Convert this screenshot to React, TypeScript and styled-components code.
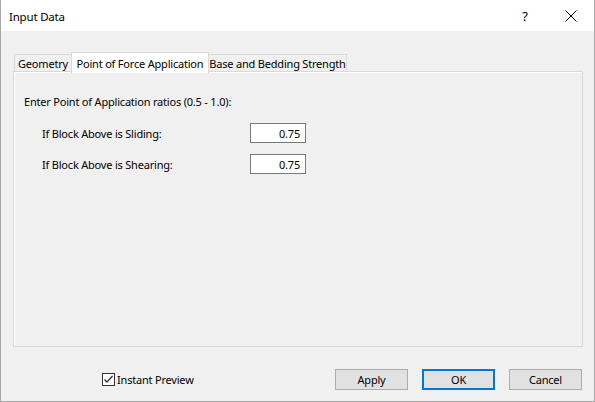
import React, { useState } from "react";
import styled, { createGlobalStyle } from "styled-components";

const GlobalStyle = createGlobalStyle`
  html, body {
    margin: 0;
    padding: 0;
    background: #f0f0f0;
  }
  * {
    box-sizing: border-box;
  }
`;

const Window = styled.div`
  width: 595px;
  height: 402px;
  display: flex;
  flex-direction: column;
  background: #f0f0f0;
  border: 1px solid #a8a8a8;
  border-top: none;
  font-family: "Noto Sans", "Open Sans", sans-serif;
  font-size: 11px;
  letter-spacing: -0.2px;
  color: #000;
`;

const TitleBar = styled.div`
  height: 31px;
  flex: none;
  display: flex;
  align-items: center;
  background: #fff;
  padding-left: 8px;
`;

const Title = styled.div`
  flex: 1;
  font-size: 11.5px;
  padding-top: 1px;
`;

const TitleButton = styled.div`
  width: 46px;
  height: 31px;
  display: flex;
  align-items: center;
  justify-content: center;
  font-size: 13px;
`;

const Body = styled.div`
  flex: 1;
  display: flex;
  flex-direction: column;
  padding: 20px 12px 0 12px;
`;

const TabRow = styled.div`
  display: flex;
  align-items: flex-end;
  height: 21px;
  padding-left: 1px;
  position: relative;
  z-index: 1;
`;

const Tab = styled.div<{ $active?: boolean; $w: number }>`
  height: ${p => (p.$active ? 21 : 18)}px;
  width: ${p => p.$w}px;
  display: flex;
  align-items: center;
  justify-content: center;
  border: 1px solid #d9d9d9;
  border-bottom: ${p => (p.$active ? "none" : "1px solid #d9d9d9")};
  background: ${p => (p.$active ? "#fff" : "#f0f0f0")};
  margin-left: ${p => (p.$active ? -1 : 0)}px;
  margin-right: ${p => (p.$active ? -1 : 0)}px;
  position: relative;
  z-index: ${p => (p.$active ? 2 : 1)};
  margin-bottom: ${p => (p.$active ? -1 : 0)}px;
  white-space: nowrap;
`;

const Panel = styled.div`
  width: 570px;
  height: 276px;
  margin-top: -1px;
  border: 1px solid #d9d9d9;
  box-shadow: inset 1px 1px 0 #fff;
  padding: 19px 0 0 10px;
  display: flex;
  flex-direction: column;
`;

const Prompt = styled.div`
  height: 20px;
  display: flex;
  align-items: center;
  margin-bottom: 12px;
`;

const FieldRow = styled.div`
  display: flex;
  align-items: center;
  padding-left: 18px;
  margin-bottom: 11px;
`;

const FieldLabel = styled.div`
  width: 208px;
`;

const ValueBox = styled.input`
  width: 56px;
  height: 20px;
  border: 1px solid #7a7a7a;
  background: #fff;
  text-align: right;
  padding: 0 5px 0 0;
  font: inherit;
  letter-spacing: inherit;
  color: #000;
  outline: none;
`;

const Footer = styled.div`
  display: flex;
  align-items: center;
  margin-top: 22px;
  height: 21px;
`;

const CheckGroup = styled.label`
  display: flex;
  align-items: center;
  margin-left: 89px;
  gap: 2px;
  flex: 1;
`;

const CheckBox = styled.span`
  width: 13px;
  height: 13px;
  border: 1px solid #333;
  background: #fff;
  display: flex;
  align-items: center;
  justify-content: center;
`;

const Buttons = styled.div`
  display: flex;
  gap: 14px;
`;

const Button = styled.button<{ $default?: boolean }>`
  width: 73px;
  height: 21px;
  background: #e1e1e1;
  border: ${p => (p.$default ? "2px solid #0078d7" : "1px solid #adadad")};
  font: inherit;
  letter-spacing: inherit;
  color: #000;
  padding: 0;
`;

const tabs = [
  { label: "Geometry", width: 58 },
  { label: "Point of Force Application", width: 138 },
  { label: "Base and Bedding Strength", width: 139 },
];

const App: React.FC = () => {
  const [active] = useState(1);
  const [checked] = useState(true);

  return (
    <>
      <GlobalStyle />
      <Window>
        <TitleBar>
          <Title>Input Data</Title>
          <TitleButton>?</TitleButton>
          <TitleButton>
            <svg width="12" height="12" viewBox="0 0 12 12">
              <path d="M0.5 0.5 L11.5 11.5 M11.5 0.5 L0.5 11.5" stroke="#000" strokeWidth="1" fill="none" />
            </svg>
          </TitleButton>
        </TitleBar>
        <Body>
          <TabRow>
            {tabs.map((t, i) => (
              <Tab key={t.label} $active={i === active} $w={t.width}>
                {t.label}
              </Tab>
            ))}
          </TabRow>
          <Panel>
            <Prompt>Enter Point of Application ratios (0.5 - 1.0):</Prompt>
            <FieldRow>
              <FieldLabel>If Block Above is Sliding:</FieldLabel>
              <ValueBox defaultValue="0.75" />
            </FieldRow>
            <FieldRow>
              <FieldLabel>If Block Above is Shearing:</FieldLabel>
              <ValueBox defaultValue="0.75" />
            </FieldRow>
          </Panel>
          <Footer>
            <CheckGroup>
              <CheckBox>
                {checked && (
                  <svg width="11" height="11" viewBox="0 0 11 11">
                    <path d="M1.5 5.5 L4 8 L9.5 2" stroke="#333" strokeWidth="1.3" fill="none" />
                  </svg>
                )}
              </CheckBox>
              Instant Preview
            </CheckGroup>
            <Buttons>
              <Button>Apply</Button>
              <Button $default>OK</Button>
              <Button>Cancel</Button>
            </Buttons>
          </Footer>
        </Body>
      </Window>
    </>
  );
};

export default App;
